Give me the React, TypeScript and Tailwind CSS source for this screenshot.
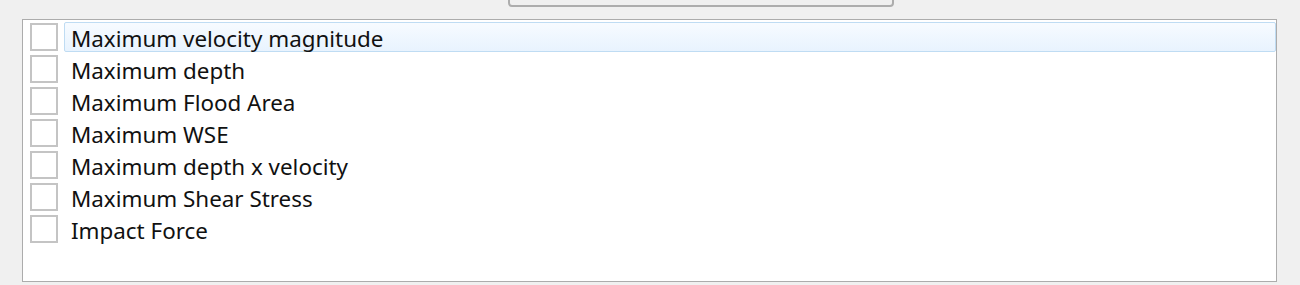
const items = [
  "Maximum velocity magnitude",
  "Maximum depth",
  "Maximum Flood Area",
  "Maximum WSE",
  "Maximum depth x velocity",
  "Maximum Shear Stress",
  "Impact Force",
]

interface RowProps {
  label: string
  selected?: boolean
}
const Row: React.FC<RowProps> = ({ label, selected = false }) => {
  return (
    <div role="listitem" className="flex items-center h-[32px]">
      <div className="w-[28px] h-[28px] ml-[7px] shrink-0 border-2 border-[#c4c4c4] bg-white" />
      <div
        className={`flex items-center flex-1 h-[30px] ml-[6px] pl-[6px] pt-[4px] rounded-[2px] border ${
          selected
            ? "border-[#bfdcf3] bg-gradient-to-b from-[#f7fbff] to-[#e8f3fe]"
            : "border-transparent"
        }`}
      >
        <span className="text-[22.4px] leading-none text-[#111]">{label}</span>
      </div>
    </div>
  )
}

export default function App() {
  return (
    <div
      className="w-[1300px] h-[285px] overflow-hidden bg-[#f0f0f0]"
      style={{ fontFamily: '"Noto Sans", "Open Sans", sans-serif' }}
    >
      {/* bottom edge of the button above the list */}
      <div className="ml-[508px] w-[386px] h-[36px] mt-[-29px] border-2 border-[#adadad] rounded-[4px] bg-[#f0f0f0]" />
      <div
        role="list"
        className="ml-[22px] mt-[12px] w-[1255px] h-[263px] border border-[#acacac] bg-white pt-[1px]"
      >
        {items.map((label, i) => (
          <Row key={label} label={label} selected={i === 0} />
        ))}
      </div>
    </div>
  )
}
